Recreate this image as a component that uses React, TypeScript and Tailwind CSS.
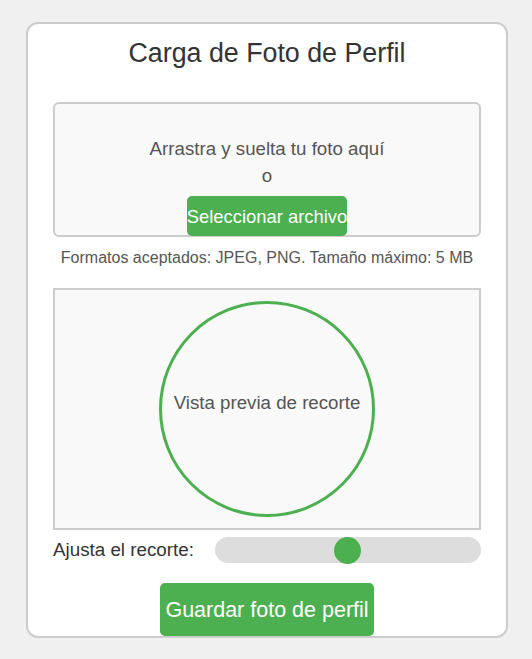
export default function App() {
  return (
    <div className="min-h-[659px] bg-[#f0f0f0] pt-[22px] font-['Liberation_Sans',Arial,sans-serif]">
      <div className="mx-auto flex h-[616px] w-[482px] translate-x-[1px] flex-col items-center rounded-[12px] border-2 border-[#ccc] bg-white px-[25px] pt-[14px]">
        <h2 className="text-[26.8px] leading-[30px] text-[#333]">Carga de Foto de Perfil</h2>

        <div className="mt-[34px] flex h-[135px] w-full shrink-0 flex-col items-center rounded-[6px] border-2 border-[#ccc] bg-[#f9f9f9] pt-[31px] text-[18.7px] leading-[27px] text-[#555]">
          <p>Arrastra y suelta tu foto aquí</p>
          <p>o</p>
          <button className="mt-[7px] flex h-[40px] w-[160px] shrink-0 items-center justify-center whitespace-nowrap rounded-[5px] bg-[#4caf50] text-[18.4px] text-white">
            Seleccionar archivo
          </button>
        </div>

        <p className="mt-[9px] text-[16px] leading-[24px] text-[#555]">
          Formatos aceptados: JPEG, PNG. Tamaño máximo: 5 MB
        </p>

        <div className="mt-[18px] flex h-[242px] w-full shrink-0 items-center justify-center border-2 border-[#ccc] bg-[#f9f9f9]">
          <div className="flex h-[216px] w-[216px] items-center justify-center rounded-full border-[3px] border-[#4caf50] pb-[12px] text-[18.7px] text-[#555]">
            Vista previa de recorte
          </div>
        </div>

        <div className="mt-[6px] flex w-full items-center gap-[21px]">
          <span className="whitespace-nowrap text-[18.8px] text-[#333]">Ajusta el recorte:</span>
          <div className="flex h-[26px] flex-1 items-center justify-center rounded-full bg-[#ddd]">
            <div className="h-[27px] w-[27px] rounded-full bg-[#4caf50]" />
          </div>
        </div>

        <button className="mt-[19px] mb-[-2px] h-[53px] w-[214px] shrink-0 whitespace-nowrap rounded-[5px] bg-[#4caf50] text-[21.5px] text-white">
          Guardar foto de perfil
        </button>
      </div>
    </div>
  );
}
